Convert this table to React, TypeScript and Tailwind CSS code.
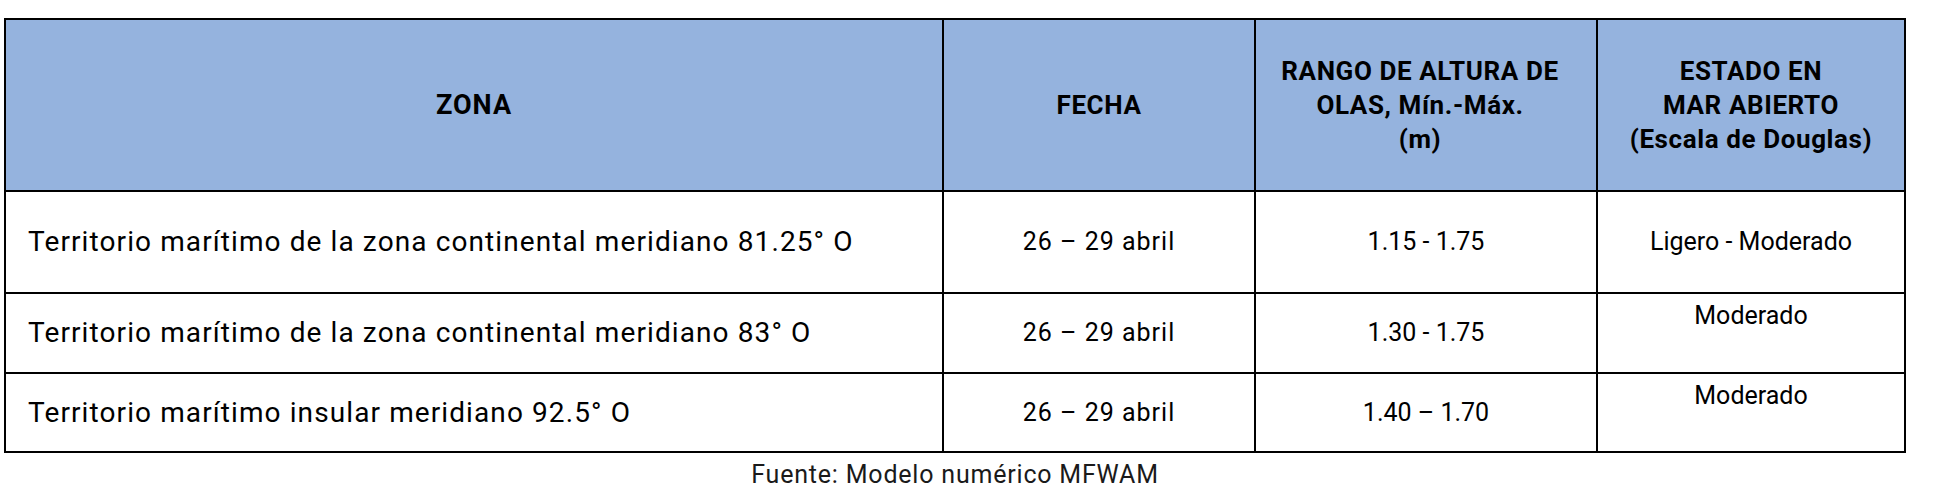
const rows = [
  {
    zona: "Territorio marítimo de la zona continental meridiano 81.25° O",
    fecha: "26 – 29 abril",
    rango: "1.15 - 1.75",
    estado: "Ligero - Moderado",
    top: false,
  },
  {
    zona: "Territorio marítimo de la zona continental meridiano 83° O",
    fecha: "26 – 29 abril",
    rango: "1.30 - 1.75",
    estado: "Moderado",
    top: true,
  },
  {
    zona: "Territorio marítimo insular meridiano 92.5° O",
    fecha: "26 – 29 abril",
    rango: "1.40 – 1.70",
    estado: "Moderado",
    top: true,
  },
];

export default function App() {
  return (
    <div className="w-[1942px] h-[496px] bg-white pt-[18px] pl-[4px] font-['Roboto',sans-serif] text-black">
      <div className="w-[1902px] border-2 border-black">
        <div className="grid grid-cols-[938px_312px_342px_306px] grid-rows-[172px_102px_80px_77px]">
          {/* header */}
          <div className="bg-[#95b3de] border-r-2 border-b-2 border-black flex items-center justify-center text-[27px] tracking-[1px] font-bold">
            ZONA
          </div>
          <div className="bg-[#95b3de] border-r-2 border-b-2 border-black flex items-center justify-center text-[26px] tracking-[0.6px] font-bold">
            FECHA
          </div>
          <div className="bg-[#95b3de] border-r-2 border-b-2 border-black flex items-center justify-center text-center text-[26px] tracking-[0.6px] font-bold leading-[34px] pr-[12px]">
            <div>
              RANGO DE ALTURA DE
              <br />
              OLAS, Mín.-Máx.
              <br />
              (m)
            </div>
          </div>
          <div className="bg-[#95b3de] border-b-2 border-black flex items-center justify-center text-center text-[26px] tracking-[0.6px] font-bold leading-[34px]">
            <div>
              ESTADO EN
              <br />
              MAR ABIERTO
              <br />
              (Escala de Douglas)
            </div>
          </div>

          {rows.map((r, i) => {
            const last = i === rows.length - 1;
            return [
              <div
                key={`z${i}`}
                className={`border-r-2 border-black flex items-center pl-[22px] text-[28px] tracking-[1.1px] ${last ? "" : "border-b-2"}`}
              >
                {r.zona}
              </div>,
              <div
                key={`f${i}`}
                className={`border-r-2 border-black flex items-center justify-center text-[25px] tracking-[1px] ${last ? "" : "border-b-2"}`}
              >
                {r.fecha}
              </div>,
              <div
                key={`r${i}`}
                className={`border-r-2 border-black flex items-center justify-center text-[25px] ${last ? "" : "border-b-2"}`}
              >
                {r.rango}
              </div>,
              <div
                key={`e${i}`}
                className={`border-black flex justify-center text-[25px] ${r.top ? "items-start pt-[3px]" : "items-center"} ${last ? "" : "border-b-2"}`}
              >
                {r.estado}
              </div>,
            ];
          })}
        </div>
      </div>
      <div className="w-[1902px] text-center text-[25px] text-[#1a1a1a] tracking-[0.8px] mt-[3px]">
        Fuente: Modelo numérico MFWAM
      </div>
    </div>
  );
}
